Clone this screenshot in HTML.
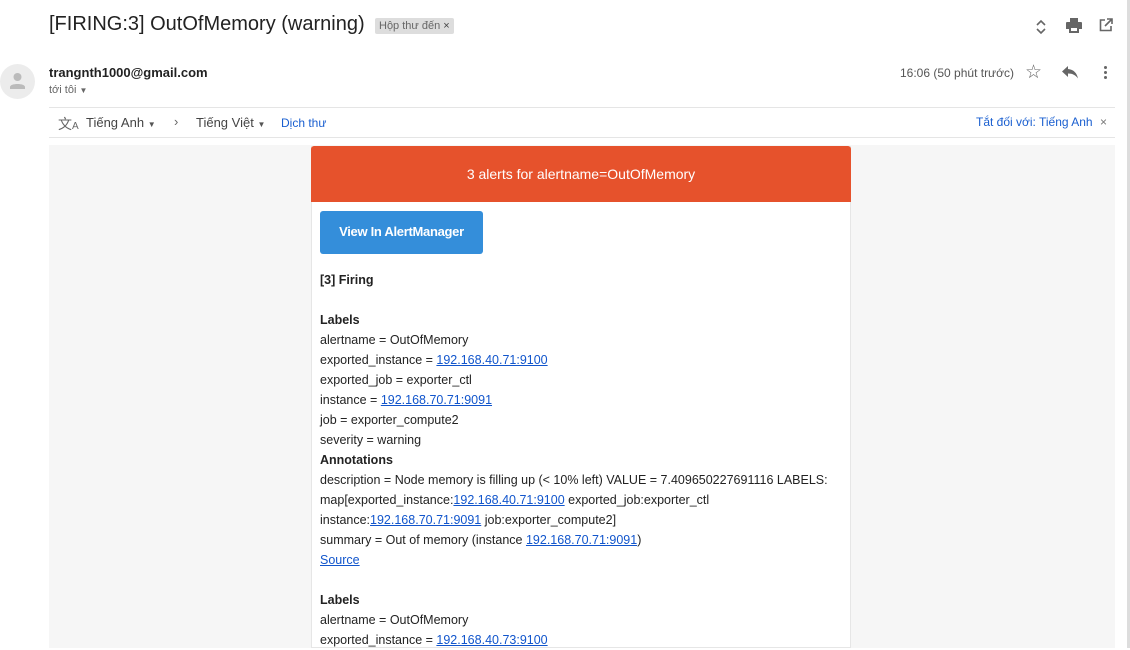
<!DOCTYPE html>
<html><head><meta charset="utf-8"><style>
*{margin:0;padding:0;box-sizing:border-box}
body{width:1130px;height:648px;overflow:hidden;background:#fff;font-family:"Liberation Sans",Arial,sans-serif;position:relative;color:#222}
.abs{position:absolute}
.title{left:49px;top:13px;font-size:20px;color:#222;white-space:nowrap}
.tag{left:375px;top:18px;background:#ddd;border-radius:2px;font-size:11px;color:#666;padding:1px 4px;height:16px;line-height:15px}
.av{left:0;top:64px;width:35px;height:35px;border-radius:50%;background:#ececec}
.gray{background:#f6f6f6;left:49px;top:145px;width:1066px;height:503px}
.card{left:311px;top:146px;width:540px;height:502px;background:#fff;border:1px solid #e6e6e6;border-top:none}
.hdr{left:311px;top:146px;width:540px;height:56px;background:#e6522c;color:#fff;font-size:14px;text-align:center;line-height:56px;border-radius:3px 3px 0 0}
.btn{left:320px;top:211px;width:163px;height:43px;background:#348eda;border-radius:3px;color:#fff;font-weight:bold;font-size:13px;text-align:center;line-height:41px;letter-spacing:-0.3px}
.body{left:320px;top:270px;font-size:12.5px;line-height:20px;color:#222;white-space:nowrap}
a{color:#1155cc;text-decoration:underline}
b{font-weight:bold}
</style></head><body>
<div class="abs title">[FIRING:3] OutOfMemory (warning)</div>
<div class="abs tag">Hộp thư đến <span style="color:#444">×</span></div>
<svg class="abs" style="left:1034px;top:18px" width="14" height="18" viewBox="0 0 14 18"><path d="M3 7l4-4 4 4M3 11l4 4 4-4" stroke="#666" stroke-width="1.6" fill="none"/></svg>
<svg class="abs" style="left:1066px;top:18px" width="16" height="15" viewBox="0 0 16 15"><path d="M4 0h8v4H4zM1 4h14a1 1 0 011 1v6h-3v4H3v-4H0V5a1 1 0 011-1zM5 10v3h6v-3z" fill="#666"/></svg>
<svg class="abs" style="left:1099px;top:18px" width="14" height="14" viewBox="0 0 14 14"><path d="M12 8v4.5H1.5V2H6M8 1h5v5M13 1L6 8" stroke="#666" stroke-width="1.6" fill="none"/></svg>
<div class="abs av"><svg width="35" height="35" viewBox="0 0 35 35"><circle cx="17.5" cy="13" r="4" fill="#bbb"/><path d="M10 23c0-4 15-4 15 0v2H10z" fill="#bbb"/></svg></div>
<div class="abs" style="left:49px;top:65px;font-size:13px;font-weight:bold;color:#222">trangnth1000@gmail.com</div>
<div class="abs" style="left:49px;top:84px;font-size:11px;color:#666">tới tôi <span style="font-size:8px">▼</span></div>
<div class="abs" style="left:900px;top:66px;font-size:12px;color:#555">16:06 (50 phút trước)</div>
<div class="abs" style="left:1025px;top:61px;font-size:19px;color:#666">☆</div>
<svg class="abs" style="left:1062px;top:66px" width="16" height="13" viewBox="0 0 16 13"><path d="M6 0L0 5.5 6 11V7.5c4.5 0 7.5 1.5 10 5C15 7.5 12 3.5 6 3z" fill="#666"/></svg>
<div class="abs" style="left:1104px;top:66px;width:3px"><div style="width:3px;height:3px;background:#666;border-radius:50%;margin-bottom:2px"></div><div style="width:3px;height:3px;background:#666;border-radius:50%;margin-bottom:2px"></div><div style="width:3px;height:3px;background:#666;border-radius:50%"></div></div>
<div class="abs" style="left:49px;top:107px;width:1066px;height:1px;background:#e5e5e5"></div>
<div class="abs" style="left:49px;top:137px;width:1066px;height:1px;background:#e5e5e5"></div>
<div class="abs" style="left:58px;top:114px;font-size:14px;color:#666">文<span style="font-size:10px">A</span></div>
<div class="abs" style="left:86px;top:115px;font-size:13px;color:#444">Tiếng Anh <span style="font-size:8px;color:#555">▼</span></div>
<div class="abs" style="left:174px;top:114px;font-size:13px;color:#666">›</div>
<div class="abs" style="left:196px;top:115px;font-size:13px;color:#444">Tiếng Việt <span style="font-size:8px;color:#555">▼</span></div>
<div class="abs" style="left:281px;top:116px;font-size:12px;color:#1a5fd0">Dịch thư</div>
<div class="abs" style="left:976px;top:115px;font-size:12px;color:#1a5fd0">Tắt đối với: Tiếng Anh <span style="color:#777;margin-left:4px">×</span></div>
<div class="abs" style="left:1127px;top:0;width:3px;height:648px;background:#ddd"></div>
<div class="abs gray"></div>
<div class="abs card"></div>
<div class="abs hdr">3 alerts for alertname=OutOfMemory</div>
<div class="abs btn">View In AlertManager</div>
<div class="abs body">
<b>[3] Firing</b><br><br>
<b>Labels</b><br>
alertname = OutOfMemory<br>
exported_instance = <a>192.168.40.71:9100</a><br>
exported_job = exporter_ctl<br>
instance = <a>192.168.70.71:9091</a><br>
job = exporter_compute2<br>
severity = warning<br>
<b>Annotations</b><br>
description = Node memory is filling up (&lt; 10% left) VALUE = 7.409650227691116 LABELS:<br>
map[exported_instance:<a>192.168.40.71:9100</a> exported_job:exporter_ctl<br>
instance:<a>192.168.70.71:9091</a> job:exporter_compute2]<br>
summary = Out of memory (instance <a>192.168.70.71:9091</a>)<br>
<a>Source</a><br><br>
<b>Labels</b><br>
alertname = OutOfMemory<br>
exported_instance = <a>192.168.40.73:9100</a>
</div>
</body></html>
